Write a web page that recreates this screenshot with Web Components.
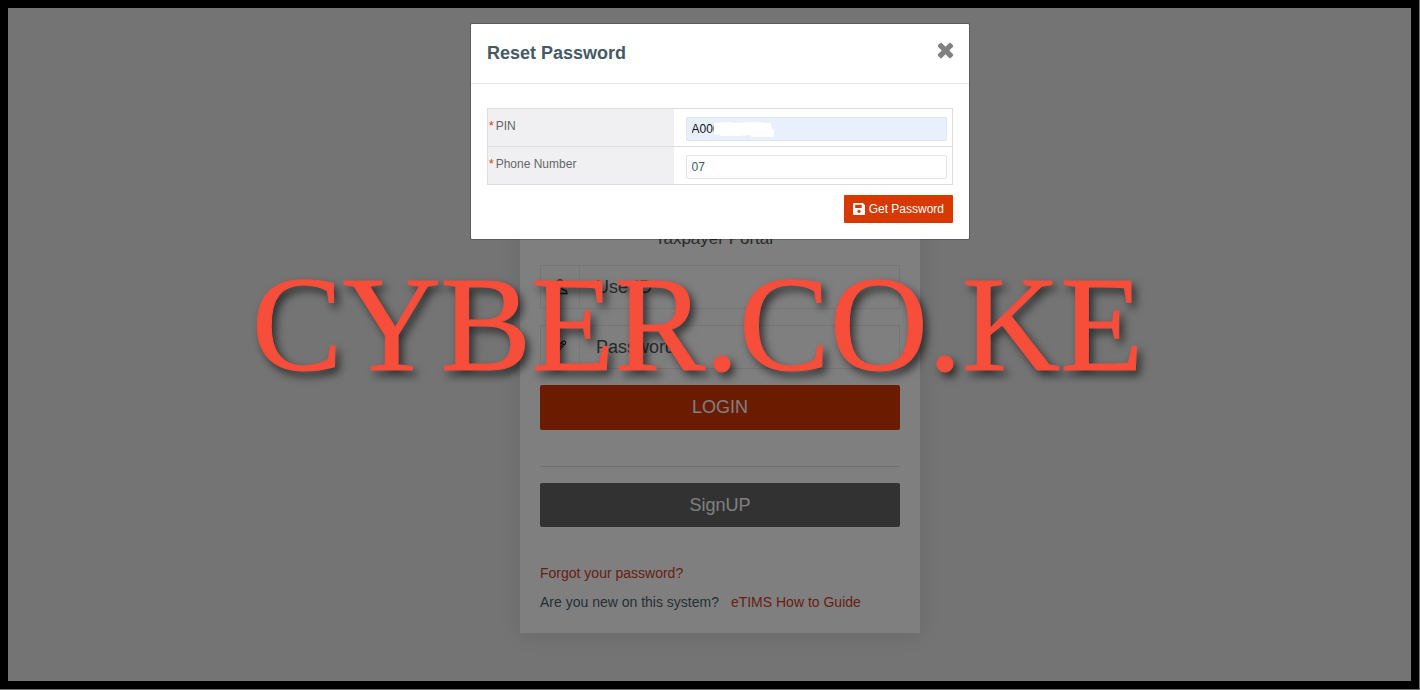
<!DOCTYPE html>
<html lang="en">
<head>
<meta charset="utf-8">
<title>Taxpayer Portal</title>
<style>
html, body { margin: 0; min-height: 100%; }
body { font-family: "Liberation Sans", Arial, sans-serif; background: #707070; }
</style>
</head>
<body>
<portal-page>
  <login-card>
    <login-field name="user" label="UserID">
      <svg slot="icon" width="16" height="16" viewBox="0 0 16 16" fill="none" stroke="#333" stroke-width="1.4"><path d="M6 9C4.500 7.500 4 5.500 4.500 3.500 5 1.500 6.300 1 8 1s3 .5 3.500 2.500C12 5.500 11.500 7.500 10 9v1.200l3.500 1.300c1 .5 1.500 1.500 1.500 3H1c0-1.500.5-2.500 1.500-3L6 10.200z"/></svg>
    </login-field>
    <login-field name="password" label="Password">
      <svg slot="icon" width="14" height="14" viewBox="0 0 14 14" fill="none" stroke="#222" stroke-width="1.100"><path d="M1 13l1-4L9.500 1.500c.8-.8 1.500-.8 2.400 0 1 .900 1 1.600.2 2.500L5 12zM2 9l3 3M8.500 2.500l3 3M3.800 10.300L10 4"/></svg>
    </login-field>
  </login-card>
  <reset-dialog slot="overlay">
    <form-row name="pin" label="PIN" value="A000" filled></form-row>
    <form-row name="phone" label="Phone Number" value="07"></form-row>
  </reset-dialog>
  <water-mark slot="overlay">CYBER.CO.KE</water-mark>
</portal-page>
<script>
const define = (name, html, setup) => {
  const template = document.createElement('template');
  template.innerHTML = '<style>*{box-sizing:border-box}:host{display:block;box-sizing:border-box}button,input{font-family:inherit;margin:0}</style>' + html;
  customElements.define(name, class extends HTMLElement {
    connectedCallback() {
      if (this.shadowRoot) return;
      this.attachShadow({ mode: 'open' }).append(template.content.cloneNode(true));
      if (setup) setup(this, this.shadowRoot);
    }
  });
};

define('portal-page', `
<style>
:host { padding: 0 1px 1px 0; min-height: 100vh; display: flex; }
.frame { position: relative; flex: 1; border: 8px solid #000; background: #e8e8e8; }
main { display: flex; justify-content: center; padding: 92px 0 48px 21px; }
</style>
<div class="frame"><main><slot></slot></main><slot name="overlay"></slot></div>`);

define('login-card', `
<style>
:host { width: 400px; padding: 128px 20px 16px; background: #fff; box-shadow: 0 2px 20px rgba(0,0,0,.1); color: #4a5f6b; }
h1 { margin: 0 0 16px; padding-right: 12px; font-size: 17px; line-height: 21px; font-weight: 400; text-align: center; color: #555; }
.fields { display: grid; gap: 16px; margin-bottom: 16px; }
button { display: block; width: 100%; height: 45px; border: 0; border-radius: 2px; font-size: 18px; color: #fff; background: #d73900; }
.signup { height: 44px; background: #646464; }
hr { margin: 36px 0 16px; border: 0; border-top: 1px solid #ddd; }
p { margin: 0; font-size: 14px; line-height: 29px; }
.forgot { margin-top: 32px; }
a { color: #d04028; text-decoration: none; }
.guide { margin-left: 8px; }
</style>
<h1>Taxpayer Portal</h1>
<div class="fields"><slot></slot></div>
<button type="submit">LOGIN</button>
<hr>
<button type="button" class="signup">SignUP</button>
<p class="forgot"><a href="#forgot">Forgot your password?</a></p>
<p>Are you new on this system? <a class="guide" href="#guide">eTIMS How to Guide</a></p>`);

define('login-field', `
<style>
:host { display: flex; height: 44px; border: 1px solid #ebebeb; }
label { width: 39px; display: grid; place-items: center; border-right: 1px solid #eee; }
input { flex: 1; min-width: 0; padding: 0 16px; border: 0; background: none; font-size: 18px; color: #555; }
input::placeholder { color: #555; opacity: 1; }
</style>
<label for="field"><slot name="icon"></slot></label><input id="field">`, (host, root) => {
  const input = root.querySelector('input');
  const label = host.getAttribute('label');
  input.name = host.getAttribute('name');
  input.placeholder = label;
  input.setAttribute('aria-label', label);
});

define('reset-dialog', `
<style>
:host { position: absolute; inset: 0; background: rgba(0,0,0,.5); display: flex; justify-content: center; align-items: flex-start; padding: 15px 0 0 21px; }
section { width: 500px; background: #fff; background-clip: padding-box; border: 1px solid rgba(0,0,0,.2); border-radius: 2px; }
header { display: flex; justify-content: space-between; align-items: flex-start; height: 60px; padding: 18px 15px 0 16px; border-bottom: 1px solid #e5e5e5; }
h2 { margin: 0; font-size: 18px; line-height: 22px; color: #455a64; }
.close { border: 0; padding: 0; background: none; line-height: 0; }
form { padding: 24px 16px 16px; }
.rows { border: 1px solid #ddd; border-bottom: 0; margin-bottom: 10px; }
.actions { display: flex; justify-content: flex-end; }
.get { display: flex; align-items: center; gap: 4px; height: 28px; padding: 0 9px; border: 0; border-radius: 1px; background: #d73900; color: #fff; font-size: 12px; white-space: nowrap; }
</style>
<section role="dialog" aria-labelledby="title">
  <header><h2 id="title">Reset Password</h2>
    <button class="close" aria-label="Close"><svg width="17" height="17" viewBox="0 0 17 17"><path d="M3 1.200Q4 .2 5 1.200L8.500 4.700 12 1.200Q13 .2 14 1.200L15.800 3Q16.800 4 15.800 5L12.300 8.500 15.800 12Q16.800 13 15.800 14L14 15.800Q13 16.800 12 15.800L8.500 12.300 5 15.800Q4 16.800 3 15.800L1.200 14Q.2 13 1.200 12L4.700 8.500 1.200 5Q.2 4 1.200 3Z" fill="#808080"/></svg></button>
  </header>
  <form>
    <div class="rows"><slot></slot></div>
    <div class="actions"><button type="button" class="get"><svg width="12" height="12" viewBox="0 0 11 11"><path fill="#fff" fill-rule="evenodd" d="M1 0h8l2 2v8q0 1-1 1H1q-1 0-1-1V1q0-1 1-1zM2 1.500v3h6v-3zM5.500 6.200a1.500 1.500 0 1 0 .01 0z"/></svg>Get Password</button></div>
  </form>
</section>`);

define('form-row', `
<style>
:host { display: flex; height: 38px; border-bottom: 1px solid #ddd; font-size: 12px; }
label { width: 40%; padding: 10px 0 0 1px; line-height: 14px; background: #f0f0f2; color: #666; }
label span { color: #d73900; margin-right: 2px; }
.box { position: relative; flex: 1; padding: 8px 5px 0 12px; }
input { display: block; width: 100%; height: 24px; padding: 0 5px; border: 1px solid #e2e5e8; border-radius: 2px; background: #fff; font-size: 12px; color: #455a64; }
:host([filled]) input { background: #e8f0fe; color: #111; }
svg { display: none; position: absolute; left: 40px; top: 13px; }
:host([filled]) svg { display: block; }
</style>
<label for="value"><span>*</span><b style="font-weight:400"></b></label>
<div class="box"><input id="value"><svg width="60" height="15" viewBox="0 0 60 15"><path fill="#fff" d="M0 1L14 0 22 1 40 0 57 1 58 7 60 7V15H37V13L22 14 8 14 3 12 0 13Z"/></svg></div>`, (host, root) => {
  root.querySelector('b').textContent = host.getAttribute('label');
  const input = root.querySelector('input');
  input.name = host.getAttribute('name');
  input.value = host.getAttribute('value');
});

define('water-mark', `
<style>
:host { position: absolute; inset: 0; display: flex; align-items: center; justify-content: center; padding: 0 24px 42px 0; pointer-events: none; font-family: "Liberation Serif", serif; font-size: 136px; line-height: 1; white-space: nowrap; color: #f64e3b; -webkit-text-stroke: 1px #f64e3b; filter: drop-shadow(4px 5px 4px rgba(0,0,0,.6)); }
</style>
<slot></slot>`);
</script>
</body>
</html>
